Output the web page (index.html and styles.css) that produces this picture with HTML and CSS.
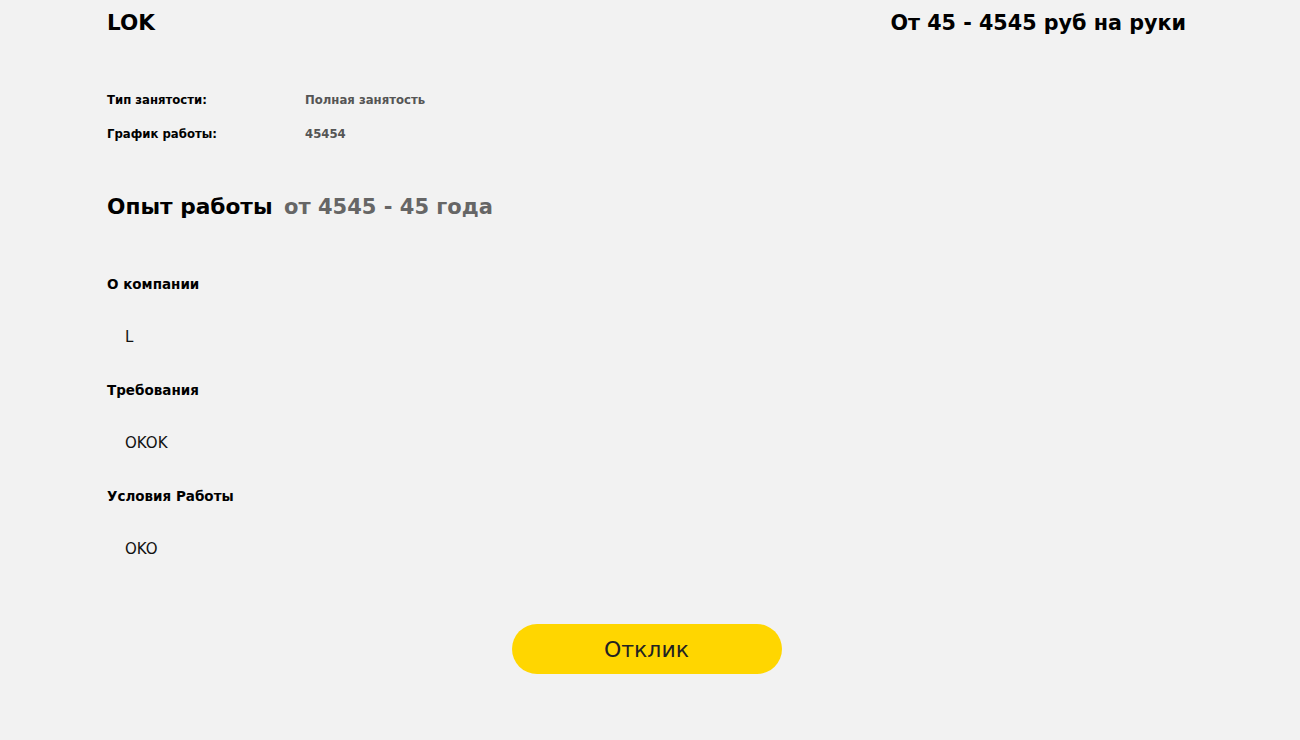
FILE: index.html
```html
<!DOCTYPE html>
<html lang="ru">
<head>
<meta charset="utf-8">
<title>Вакансия</title>
<link rel="stylesheet" href="styles.css">
</head>
<body>
<main class="page">
  <header class="head">
    <h1 class="title">LOK</h1>
    <div class="salary">От 45 - 4545 руб на руки</div>
  </header>

  <section class="info">
    <div class="info-row">
      <span class="info-label">Тип занятости:</span>
      <span class="info-value">Полная занятость</span>
    </div>
    <div class="info-row">
      <span class="info-label">График работы:</span>
      <span class="info-value">45454</span>
    </div>
  </section>

  <h2 class="exp">Опыт работы <span class="exp-value">от 4545 - 45 года</span></h2>

  <section class="block">
    <h3 class="block-title">О компании</h3>
    <p class="block-text">L</p>
  </section>
  <section class="block">
    <h3 class="block-title">Требования</h3>
    <p class="block-text">OKOK</p>
  </section>
  <section class="block">
    <h3 class="block-title">Условия Работы</h3>
    <p class="block-text">OKO</p>
  </section>

  <div class="actions">
    <button class="reply" type="button">Отклик</button>
  </div>
</main>
</body>
</html>
```

FILE: styles.css
```css
* { box-sizing: border-box; }

html, body {
  margin: 0;
  background: #f2f2f2;
}

body {
  font-family: "DejaVu Sans", sans-serif;
  color: #000;
  height: 740px;
}

.page {
  padding: 0 114px 0 107px;
}

.head {
  display: flex;
  justify-content: space-between;
  align-items: center;
  padding-top: 10px;
}

.title {
  margin: 0;
  font-size: 21.5px;
  line-height: 26px;
  font-weight: 700;
}

.salary {
  margin: 0;
  font-size: 20.7px;
  line-height: 26px;
  font-weight: 700;
}

.info {
  margin-top: 56px;
  display: flex;
  flex-direction: column;
  gap: 18px;
}

.info-row {
  display: flex;
  font-size: 11.7px;
  line-height: 16px;
  font-weight: 700;
}

.info-label {
  width: 198px;
  color: #000;
}

.info-value {
  color: #555;
  font-weight: 600;
}

.exp {
  margin: 52px 0 0;
  font-size: 21.7px;
  line-height: 26px;
  font-weight: 700;
}

.exp-value {
  color: #666;
  font-size: 21px;
  margin-left: 4px;
}

.exp + .block {
  margin-top: 55px;
}

.block-title {
  margin: 0;
  font-size: 13.5px;
  line-height: 18px;
  font-weight: 700;
}

.block-text {
  margin: 35px 0 35px 18px;
  font-size: 15px;
  line-height: 18px;
  font-weight: 400;
  color: #111;
}

.actions {
  display: flex;
  justify-content: center;
  margin-top: 66px;
}

.reply {
  width: 270px;
  height: 50px;
  border: none;
  border-radius: 25px;
  background: #ffd600;
  color: #222;
  font-family: "DejaVu Sans", sans-serif;
  font-size: 22px;
  font-weight: 500;
  cursor: pointer;
}
```
